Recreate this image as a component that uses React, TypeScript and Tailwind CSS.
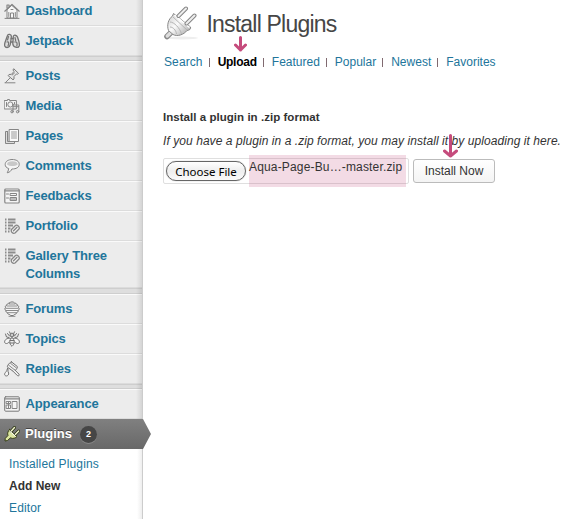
import type { ReactNode } from "react";

function Icon({ children, size = 16 }: { children: ReactNode; size?: number }) {
  return (
    <svg width={size} height={size} viewBox="0 0 16 16" fill="none" stroke="#858585" strokeWidth="1" strokeLinejoin="round" strokeLinecap="round">
      {children}
    </svg>
  );
}

const House = () => (
  <Icon>
    <path d="M3 7V15h10V7L8 2.500Z" fill="#f7f7f7" />
    <path d="M.8 8.200 8 1.500l7.200 6.700M3 5V2h2v1.500" strokeWidth="1.200" />
    <path d="M6.500 15v-5h3v5M4.800 9.500v4M11.300 9.500v4M1 15.400h14M7 6.500h2" />
  </Icon>
);
const Binoculars = () => (
  <Icon>
    <g stroke="#747474" strokeWidth="1.300">
      <path d="M3.500 2.500 1 9.500c-1 3.500 0 5 2 5s3-1 3.500-4l.9-7C7.500 1.300 4 .5 3.500 2.500Z" fill="#ddd" />
      <path d="M9.300 3.500 8.800 10.500c0 4 5.500 5.200 6.500 2.200.5-2-.7-5.700-1.800-8.700-.8-2-4.200-2.500-4.200-.5Z" fill="#ddd" />
      <path d="M7.200 5.500h2M6.800 9h2" />
      <path d="M3 9c1.700-.6 2.300.8 1 4M10.800 9c2.500-.8 2.600 2 2 4M4.500 3.500 3.500 7M11 4.500l.7 3" strokeWidth="1.200" />
    </g>
  </Icon>
);
const Pin = () => (
  <Icon>
    <path d="m10 1 4.500 4.300-1 1-1-.4-2.500 2.600v2.500l-1 .8L4 7.500l1-1 2.500-.2L10 3.500l-.8-1.200Z" fill="#e6e6e6" stroke="#7c7c7c" />
    <path d="M6 10 1.500 14.500M1 14.800h10M8.200 7l2.300-2" />
  </Icon>
);
const Camera = () => (
  <Icon>
    <path d="M.6 2.500h2.900V1.500h2v1h6.900v8.500H.6Z" fill="#f2f2f2" />
    <circle cx="6.400" cy="6.500" r="2.600" />
    <path d="M2.500 4.500v4M10.500 4.500v1.500M9 13V7h5.800v6M9 8.700h5.500" />
    <circle cx="8" cy="13.700" r="1.200" fill="#ddd" />
    <circle cx="13.600" cy="13.700" r="1.200" fill="#ddd" />
  </Icon>
);
const Pages = () => (
  <Icon>
    <path d="M3.500 3.500h-2v12h9v-2M3.500 3.500v10h2" fill="#ddd" />
    <path d="M5.500 1.500h9v12h-9Z" fill="#fafafa" />
    <path d="M7.500 4h5M7.500 6h5M7.500 8h5M7.500 10h5" stroke="#999" />
  </Icon>
);
const Bubble = () => (
  <Icon>
    <path d="M8.300 1.500C4 1.500 1.200 3.500 1.200 6.500c0 2 1.200 3.300 3.500 4-.2 1.900-.8 3.200-1.500 4.300 2.700-.5 4-2.200 4.700-3.800 4.500 0 7.300-1.700 7.300-4.700S12.500 1.500 8.300 1.500Z" fill="#f5f5f5" />
    <path d="M3 6.500C3 4.500 5 3.300 8.300 3.300s5.400 1.200 5.400 3.200c-3 2-7.500 2-10.700 0Z" fill="#c8c8c8" stroke="none" />
  </Icon>
);
const Feedback = () => (
  <Icon>
    <rect x=".8" y="1" width="14.400" height="14" rx="1" fill="#f5f5f5" strokeWidth="1.200" />
    <path d="M1 2.800h14" strokeWidth="1.200" />
    <path d="M2.500 6h2M2.500 10h2M6.500 5.500h6v2h-6ZM6.500 9.500h6v3h-6ZM6.500 11h6" />
  </Icon>
);
const ListPen = () => (
  <Icon>
    <path d="M1 1.500h1.500M4 1.500h7.500M1 4.500h1.500M4 4.500h7.500M1 7.500h1.500M4 7.500h5M1 10.500h1.500M4 10.500h2.500M1 13.500h1.500M4 13.500h1.500" stroke="#8c8c8c" strokeWidth="2" strokeLinecap="butt" />
    <path d="m7.500 11.500 4-4c1.500-1.200 4.700 1.500 3.500 3.500l-4 4c-2 1-4.500-1-3.500-3.500Z" fill="#f2f2f2" strokeWidth="1.300" />
    <path d="m9.500 12.800 3.500-3.500" strokeWidth="1.300" />
  </Icon>
);
const Hive = () => (
  <Icon>
    <path d="M5.500 2c1-1.500 4-1.500 5 0 2 .5 2.500 1 2.500 2 1.500.5 2 1.500 1.500 2.500 1 1 .7 2-.3 3 0 1.300-.7 2-1.700 2.300-.5 1.200-1 1.700-2 1.700-1 1.500-4 1.500-5 0-1 0-1.700-.5-2-1.700-1-.3-1.700-1-1.700-2.300-1-1-1.200-2-.3-3C1 5.500 1.500 4.500 3 4c0-1 .5-1.500 2.500-2Z" fill="#f6f6f6" stroke="#707070" />
    <path d="M5 3h6M3 5h10M2 7.300h12M2 9.500h12M3.500 11.700h9M5 15.300h6" stroke="#8a8a8a" />
  </Icon>
);
const Bee = () => (
  <Icon>
    <g stroke="#707070">
      <path d="M5.500 5 3.500 2.500M10.500 5l2-2.500M5 6.500 2.500 6 1.500 3M11 6.500l2.500-.5 1-3M5.500.8 6.500 3M10.500.8 9.500 3" />
      <circle cx="8" cy="4" r="1.900" fill="#ccc" />
      <path d="M6.500 7.500C3 6.500.5 9 .6 11c.2 2.200 3.500 2 4.400 0M9.500 7.500c3.500-1 6 1.500 5.900 3.500-.2 2.200-3.500 2-4.400 0" fill="#f6f6f6" />
      <path d="M8 6.500c-3 2-3 6.500 0 8.800 3-2.300 3-6.800 0-8.800Z" fill="#eee" />
      <path d="M6 9.500h4M6 12h4" />
    </g>
  </Icon>
);
const Dipper = () => (
  <Icon>
    <g stroke="#707070">
      <path d="m7.500.9 5.800 4.600c.8 1-2.300 5-3.800 5L3.500 6.200C2.700 5.200 6 .6 7.500.9Z" fill="#f0f0f0" />
      <path d="m6.500 2.300 6 4.700M4.800 4.300l6 4.700" stroke="#8a8a8a" />
      <path d="m10.900 9 4.100 4.200c.7 1.300-.6 2.200-1.600 1.400L9.300 10.500" fill="#f6f6f6" />
      <path d="M3.800 7.500C4.500 9 3.600 10 4.200 11c.8 1.300.6 3-.8 3.700-1.300.6-2.700 0-2.800-1.400-.1-1.300 1.500-2.200 2-3.300Z" fill="#f6f6f6" />
    </g>
  </Icon>
);
const Layout = () => (
  <Icon>
    <rect x=".7" y=".8" width="14.600" height="14.400" rx="1" fill="#f5f5f5" stroke="#777" />
    <path d="M1 2.800h14" strokeWidth="1.300" />
    <path d="M2.500 5.500h4v2h-4ZM2.500 9h4v3.500h-4ZM8.500 5.500h4.500v7H8.500ZM4.500 5.500v7" />
  </Icon>
);
const SmallPlug = () => (
  <Icon>
    <path d="m5.500 3.500 7.500 7c-1 1.500-4.500 2.700-6.500 1.300L3.500 14.500 1 15l.3-2.700L4 9.500c-1-2 .2-4.800 1.500-6Z" fill="#dce6a0" stroke="#394018" />
    <path d="M7.300 5 10.500 1.500M11.300 8.500 14.700 5" stroke="#273010" strokeWidth="3" />
    <path d="M7.300 5 10.500 1.500M11.300 8.500 14.700 5" stroke="#f0f4cc" strokeWidth="1.500" />
    <path d="m6.200 5.500 5 4.700" stroke="#fff" />
  </Icon>
);

function Row({ icon, children, tall = false }: { icon: ReactNode; children: ReactNode; tall?: boolean }) {
  return (
    <div className={`${tall ? "h-[47px]" : "h-[30px]"} flex shrink-0 border-t border-b border-t-[#fafafa] border-b-[#dcdcdc] pl-1 pt-[5px]`}>
      <div className="mt-px w-[21.500px] shrink-0">{icon}</div>
      <div className="text-[13px] leading-[18px] font-bold tracking-[-0.13px] text-[#21759b]">{children}</div>
    </div>
  );
}

const Divider = ({ thick = false }: { thick?: boolean }) => (
  <div className={`${thick ? "h-[6px]" : "h-[5px]"} shrink-0 border-y border-y-[#cecece] bg-[#dedede]`} />
);

function Arrow({ w, h }: { w: number; h: number }) {
  return (
    <svg width={w} height={h} fill="none" stroke="#c54b7c" strokeLinecap="round" strokeLinejoin="round">
      <path d={`M${w / 2} 1.500V${h - 2}M1.500 ${h - 7}L${w / 2} ${h - 2}L${w - 1.5} ${h - 7}`} strokeWidth="3" />
    </svg>
  );
}

const Bar = () => <span className="mr-2 ml-[6px] h-[9px] w-px bg-[#806a70]" />;

export default function App() {
  return (
    <div className="flex h-[519px] w-[577px] overflow-hidden bg-white font-['Liberation_Sans',Arial,sans-serif] text-[12px] text-[#333]">
      <aside className="relative flex w-[143px] shrink-0 flex-col border-r border-[#cccccc] bg-[#ececec]">
        <div className="-mt-1 flex flex-col">
          <Row icon={<House />}>Dashboard</Row>
          <Row icon={<Binoculars />}>Jetpack</Row>
          <Divider />
          <Row icon={<Pin />}>Posts</Row>
          <Row icon={<Camera />}>Media</Row>
          <Row icon={<Pages />}>Pages</Row>
          <Row icon={<Bubble />}>Comments</Row>
          <Row icon={<Feedback />}>Feedbacks</Row>
          <Row icon={<ListPen />}>Portfolio</Row>
          <Row icon={<ListPen />} tall>Gallery Three<br />Columns</Row>
          <Divider thick />
          <Row icon={<Hive />}>Forums</Row>
          <Row icon={<Bee />}>Topics</Row>
          <Row icon={<Dipper />}>Replies</Row>
          <Divider />
          <Row icon={<Layout />}>Appearance</Row>
        </div>
        <div className="pointer-events-none absolute top-0 right-0 h-[419px] w-[6px] bg-linear-to-r from-transparent to-black/10" />
        <div className="relative z-10 flex h-[30px] w-[151px] shrink-0 items-center bg-linear-to-b from-[#808080] to-[#686868] pl-1 [clip-path:polygon(0_0,143px_0,100%_50%,143px_100%,0_100%)]">
          <div className="w-[21px]"><SmallPlug /></div>
          <span className="text-[13px] font-bold text-white [text-shadow:0_-1px_0_#444]">Plugins</span>
          <span className="mt-px ml-2 flex h-[17px] w-[17px] items-center justify-center rounded-full bg-[#464646] text-[9px] font-bold text-white shadow-[0_1px_0_#888]">2</span>
        </div>
        <div className="h-[70px] shrink-0 bg-white bg-linear-to-l from-[#eeeeee] to-transparent bg-[length:5px_100%] bg-right bg-no-repeat pt-1 pl-[9px] leading-[22px] text-[#21759b]">
          <div className="tracking-[0.15px]">Installed Plugins</div>
          <div className="font-bold text-[#333]">Add New</div>
          <div className="tracking-[0.15px]">Editor</div>
        </div>
      </aside>

      <main className="relative flex grow flex-col pl-5">
        <header className="flex h-[46px] items-start">
          <svg className="mt-[6px] ml-px shrink-0" width="36" height="36" viewBox="0 0 36 36">
            <defs>
              <linearGradient id="metal" x1="0" y1="0" x2="1" y2="1">
                <stop stopColor="#ccc" /><stop offset=".45" stopColor="#fafafa" /><stop offset="1" stopColor="#a0a0a0" />
              </linearGradient>
            </defs>
            <ellipse cx="18" cy="32" rx="16" ry="1.500" fill="#eee" />
            <path d="M7.500 26 3 30.500" stroke="#888" strokeWidth="5.500" strokeLinecap="round" />
            <path d="M7.500 26 3.300 30" stroke="#ddd" strokeWidth="3.500" strokeLinecap="round" />
            <path d="m9.500 7.500 17 13.500c.5 2-.5 3-3.500 3.500-3 4-9.500 6.500-14 4L4.500 24.500C2.500 19 4.500 13 8.500 10Z" fill="url(#metal)" stroke="#888" strokeLinejoin="round" />
            <path d="M8.500 10.500 23 24M6 16c4 0 10 6 11.500 12M6 21c3 0 6 3 6.500 7" fill="none" stroke="#b5b5b5" />
            <path d="m10.500 9 15 12.500" stroke="#fff" strokeWidth="1.500" />
            <g strokeLinecap="round">
              <path d="m14.500 10 7.500-7.500M22.500 17.500l8-8" stroke="#858585" strokeWidth="4" />
              <path d="m14.500 10 7.500-7.500M22.500 17.500l8-8" stroke="#eeeeee" strokeWidth="2" />
            </g>
          </svg>
          <h1 className="mt-[9px] ml-[6.500px] text-[23px] leading-[30px] tracking-[-0.8px] whitespace-nowrap text-[#464646]">Install Plugins</h1>
        </header>
        <div className="absolute top-9 left-[91px]"><Arrow w={13} h={16} /></div>

        <nav className="mt-2 flex h-4 items-center pl-px whitespace-nowrap text-[#21759b]">
          <span className="tracking-[0.1px]">Search</span><Bar />
          <b className="tracking-[-0.25px] text-black">Upload</b><Bar />
          <span>Featured</span><Bar />
          <span>Popular</span><Bar />
          <span>Newest</span><Bar />
          <span>Favorites</span>
        </nav>

        <h2 className="mt-[39px] text-[11.500px] leading-4 font-bold tracking-[0.04px]">Install a plugin in .zip format</h2>
        <p className="mt-2 leading-4 tracking-[0.065px] whitespace-nowrap italic">If you have a plugin in a .zip format, you may install it by uploading it here.</p>

        <div className="mt-[9px] flex h-[26px] items-start">
          <div className="relative flex h-[26px] w-[246px] items-center rounded-[2px] border border-[#dfdfdf] pl-[2px]">
            <button className="h-5 w-20 rounded-full border border-[#666] bg-linear-to-b from-white via-[#eeeeee] to-[#fafafa] font-['Noto_Sans','Lucida_Grande',sans-serif] text-[11.500px] leading-[17px] whitespace-nowrap text-black shadow-[0_0_1px_#888]">Choose File</button>
            <div className="absolute top-[-4px] left-[85px] h-8 w-[157px] bg-[#c54b7c]/20 pt-[4px] leading-4 tracking-[0.16px] whitespace-nowrap">Aqua-Page-Bu…-master.zip</div>
          </div>
          <button className="mt-px ml-1 h-6 w-[82px] rounded-[3px] border border-[#bbbbbb] bg-linear-to-b from-white to-[#f4f4f4] text-[12px] whitespace-nowrap text-[#333]">Install Now</button>
        </div>
        <div className="absolute top-[134px] left-[300px]"><Arrow w={15} h={24} /></div>
      </main>
    </div>
  );
}
